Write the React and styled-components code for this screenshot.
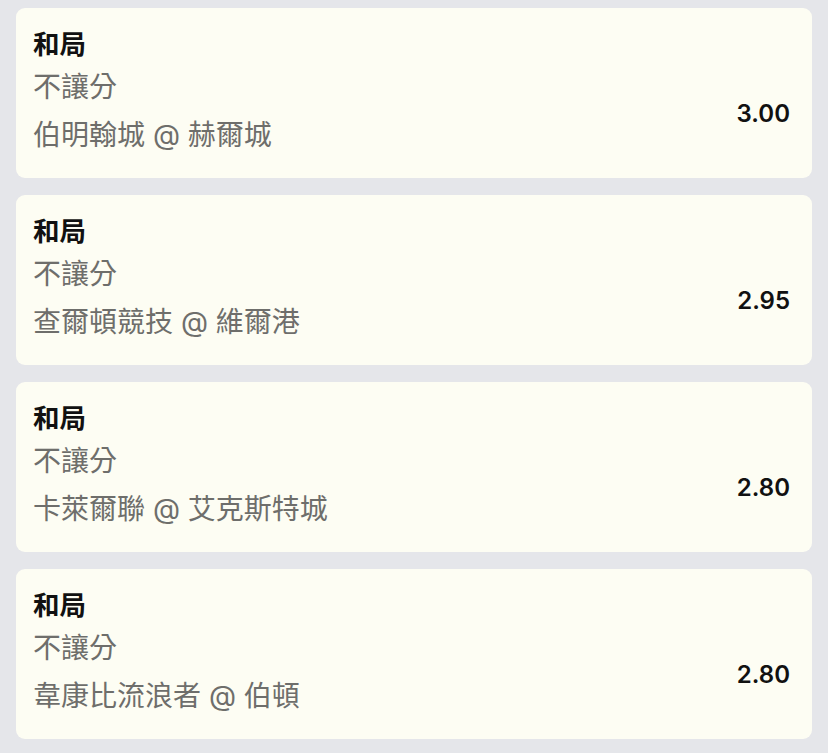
import React from "react";
import styled, { createGlobalStyle } from "styled-components";

const GlobalStyle = createGlobalStyle`
  html, body {
    margin: 0;
    padding: 0;
    background: #e5e6ea;
  }
  body {
    font-family: Inter, "Noto Sans CJK TC", sans-serif;
  }
`;

const Page = styled.div`
  display: flex;
  flex-direction: column;
  gap: 17px;
  padding: 8px 16px 15px 16px;
`;

const Card = styled.div`
  background: #fdfdf3;
  border-radius: 9px;
  padding: 17px 22px 19px 17px;
  display: flex;
  flex-direction: column;
`;

const Title = styled.div`
  font-family: Inter, "Noto Sans CJK TC", sans-serif;
  font-weight: 700;
  font-size: 26.5px;
  line-height: 38px;
  color: #111;
`;

const Body = styled.div`
  display: flex;
  align-items: center;
  justify-content: space-between;
`;

const Info = styled.div`
  display: flex;
  flex-direction: column;
`;

const Line = styled.div`
  font-family: Inter, "Noto Sans CJK TC", sans-serif;
  font-size: 28px;
  line-height: 48px;
  color: #6e6e6b;
`;

const Odds = styled.div`
  font-family: Inter, sans-serif;
  font-weight: 600;
  font-size: 24px;
  color: #111;
  margin-top: 4px;
`;

const bets = [
  { market: "和局", handicap: "不讓分", match: "伯明翰城 @ 赫爾城", odds: "3.00" },
  { market: "和局", handicap: "不讓分", match: "查爾頓競技 @ 維爾港", odds: "2.95" },
  { market: "和局", handicap: "不讓分", match: "卡萊爾聯 @ 艾克斯特城", odds: "2.80" },
  { market: "和局", handicap: "不讓分", match: "韋康比流浪者 @ 伯頓", odds: "2.80" },
];

export default function App() {
  return (
    <>
      <GlobalStyle />
      <Page>
        {bets.map((bet, i) => (
          <Card key={i}>
            <Title>{bet.market}</Title>
            <Body>
              <Info>
                <Line>{bet.handicap}</Line>
                <Line>{bet.match}</Line>
              </Info>
              <Odds>{bet.odds}</Odds>
            </Body>
          </Card>
        ))}
      </Page>
    </>
  );
}
